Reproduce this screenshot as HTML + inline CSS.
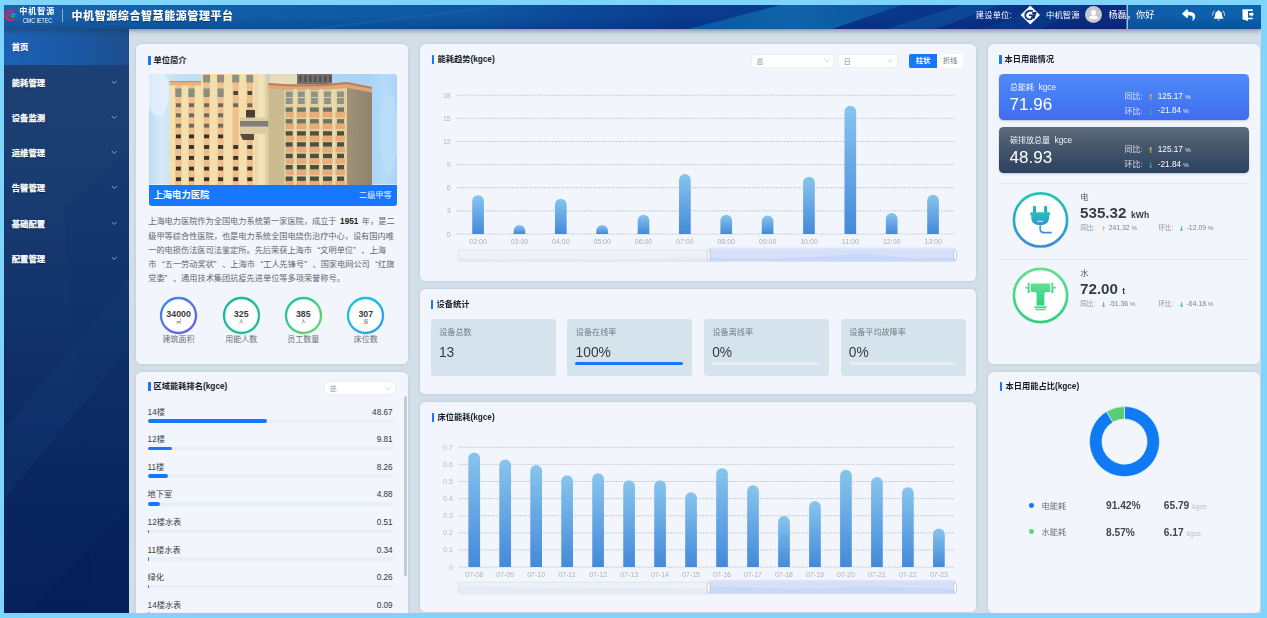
<!DOCTYPE html>
<html lang="zh-CN">
<head>
<meta charset="utf-8">
<title>中机智源综合智慧能源管理平台</title>
<style>
*{box-sizing:border-box;margin:0;padding:0}
html,body{width:1267px;height:618px;overflow:hidden;background:#7fd4fb;font-family:"Liberation Sans","Noto Sans CJK SC",sans-serif;}
#clip{position:absolute;left:4px;top:5px;width:1256.800px;height:607.800px;overflow:hidden;background:#d2dfe8}
#pg{position:absolute;left:-4px;top:-5px;width:1267px;height:618px}
b{font-weight:700}
.pl i{font-style:normal;display:inline-block;width:8.300px}
.pl i.o{text-align:right}
.pl i.c{text-align:left}
.pl b{margin:0 1.300px}
</style>
</head>
<body>
<div id="clip"><div id="pg">
<!-- main -->
<section>
<div style="position:absolute;left:129.3px;top:29px;width:1132px;height:584px;background:#d2dfe8;"></div>
<div style="position:absolute;left:136.3px;top:44px;width:272px;height:319.5px;background:#f2f6fc;border-radius:5.500px;box-shadow:0 0 3px rgba(120,140,165,.30);"></div>
<div style="position:absolute;left:136.3px;top:371.5px;width:272px;height:260px;background:#f2f6fc;border-radius:5.500px;box-shadow:0 0 3px rgba(120,140,165,.30);"></div>
<div style="position:absolute;left:420.3px;top:44px;width:555.8px;height:237.2px;background:#f2f6fc;border-radius:5.500px;box-shadow:0 0 3px rgba(120,140,165,.30);"></div>
<div style="position:absolute;left:420.3px;top:288.8px;width:555.8px;height:105.2px;background:#f2f6fc;border-radius:5.500px;box-shadow:0 0 3px rgba(120,140,165,.30);"></div>
<div style="position:absolute;left:420.3px;top:401.7px;width:555.8px;height:210px;background:#f2f6fc;border-radius:5.500px;box-shadow:0 0 3px rgba(120,140,165,.30);"></div>
<div style="position:absolute;left:988px;top:44px;width:271.7px;height:319.5px;background:#f2f6fc;border-radius:5.500px;box-shadow:0 0 3px rgba(120,140,165,.30);"></div>
<div style="position:absolute;left:988px;top:371.7px;width:271.7px;height:241px;background:#f2f6fc;border-radius:5.500px;box-shadow:0 0 3px rgba(120,140,165,.30);"></div>
</section>
<!-- sidebar -->
<section>
<div style="position:absolute;left:4px;top:29px;width:125.3px;height:584px;background:linear-gradient(180deg,#1e4174 0,#1b3f73 90px,#15376e 230px,#0c2963 400px,#06215c 584px);"></div>
<svg style="position:absolute;left:4px;top:29px" width="125.300" height="584" viewBox="0 0 125.300 584"><path d="M0 400 L125.300 250 L125.300 320 L0 470Z" fill="#1d4d86" opacity=".18"/><path d="M125.300 480 L20 584 L125.300 584Z" fill="#041a52" opacity=".35"/><path d="M60 180 L125.300 120 L125.300 584 L90 584Z" fill="#0a2a66" opacity=".12"/></svg>
<div style="position:absolute;left:4px;top:29px;width:125.3px;height:35.7px;background:linear-gradient(90deg,#1c63b5 0,#1b5cab 35%,#1b57a0 65%,#1d4d8c 100%);"></div>
<div style="position:absolute;left:11.8px;top:41.38px;height:12.45px;line-height:12.45px;font-size:8.3px;color:#fff;font-weight:700;white-space:nowrap;text-shadow:0 .5px 1px rgba(0,10,40,.6);-webkit-text-stroke:.25px #fff;">首页</div>
<div style="position:absolute;left:11.8px;top:76.62px;height:12.45px;line-height:12.45px;font-size:8.3px;color:#fff;font-weight:700;white-space:nowrap;text-shadow:0 .5px 1px rgba(0,10,40,.6);-webkit-text-stroke:.25px #fff;">能耗管理</div>
<svg style="position:absolute;left:110.500px;top:79.55px" width="6.500" height="4.640" viewBox="0 0 14 10"><path d="M2 2.500 L7 7.500 L12 2.500" fill="none" stroke="#8eafdb" stroke-width="2" stroke-linecap="round" stroke-linejoin="round"/></svg>
<div style="position:absolute;left:11.8px;top:111.88px;height:12.45px;line-height:12.45px;font-size:8.3px;color:#fff;font-weight:700;white-space:nowrap;text-shadow:0 .5px 1px rgba(0,10,40,.6);-webkit-text-stroke:.25px #fff;">设备监测</div>
<svg style="position:absolute;left:110.500px;top:114.80px" width="6.500" height="4.640" viewBox="0 0 14 10"><path d="M2 2.500 L7 7.500 L12 2.500" fill="none" stroke="#8eafdb" stroke-width="2" stroke-linecap="round" stroke-linejoin="round"/></svg>
<div style="position:absolute;left:11.8px;top:147.12px;height:12.45px;line-height:12.45px;font-size:8.3px;color:#fff;font-weight:700;white-space:nowrap;text-shadow:0 .5px 1px rgba(0,10,40,.6);-webkit-text-stroke:.25px #fff;">运维管理</div>
<svg style="position:absolute;left:110.500px;top:150.05px" width="6.500" height="4.640" viewBox="0 0 14 10"><path d="M2 2.500 L7 7.500 L12 2.500" fill="none" stroke="#8eafdb" stroke-width="2" stroke-linecap="round" stroke-linejoin="round"/></svg>
<div style="position:absolute;left:11.8px;top:182.38px;height:12.45px;line-height:12.45px;font-size:8.3px;color:#fff;font-weight:700;white-space:nowrap;text-shadow:0 .5px 1px rgba(0,10,40,.6);-webkit-text-stroke:.25px #fff;">告警管理</div>
<svg style="position:absolute;left:110.500px;top:185.30px" width="6.500" height="4.640" viewBox="0 0 14 10"><path d="M2 2.500 L7 7.500 L12 2.500" fill="none" stroke="#8eafdb" stroke-width="2" stroke-linecap="round" stroke-linejoin="round"/></svg>
<div style="position:absolute;left:11.8px;top:217.62px;height:12.45px;line-height:12.45px;font-size:8.3px;color:#fff;font-weight:700;white-space:nowrap;text-shadow:0 .5px 1px rgba(0,10,40,.6);-webkit-text-stroke:.25px #fff;">基础配置</div>
<svg style="position:absolute;left:110.500px;top:220.55px" width="6.500" height="4.640" viewBox="0 0 14 10"><path d="M2 2.500 L7 7.500 L12 2.500" fill="none" stroke="#8eafdb" stroke-width="2" stroke-linecap="round" stroke-linejoin="round"/></svg>
<div style="position:absolute;left:11.8px;top:252.88px;height:12.45px;line-height:12.45px;font-size:8.3px;color:#fff;font-weight:700;white-space:nowrap;text-shadow:0 .5px 1px rgba(0,10,40,.6);-webkit-text-stroke:.25px #fff;">配置管理</div>
<svg style="position:absolute;left:110.500px;top:255.80px" width="6.500" height="4.640" viewBox="0 0 14 10"><path d="M2 2.500 L7 7.500 L12 2.500" fill="none" stroke="#8eafdb" stroke-width="2" stroke-linecap="round" stroke-linejoin="round"/></svg>
</section>
<!-- card-intro -->
<section>
<div style="position:absolute;left:148.3px;top:55.8px;width:2.3px;height:9.2px;background:#1677ff;border-radius:.5px;"></div><div style="position:absolute;left:153.5px;top:55.01px;height:12.38px;line-height:12.38px;font-size:8.25px;color:#161c2b;font-weight:700;white-space:nowrap;">单位简介</div>
<svg style="position:absolute;left:148.5px;top:74px;border-radius:3px 3px 0 0;overflow:hidden" width="248.5" height="110.5" viewBox="0 0 248.5 110.5"><defs><linearGradient id="sky" x1="0" y1="0" x2="1" y2="0"><stop offset="0" stop-color="#b9dcf6"/><stop offset=".05" stop-color="#d6eaf8"/><stop offset=".12" stop-color="#c3e0f6"/><stop offset=".88" stop-color="#a6d4f6"/><stop offset=".95" stop-color="#b6dbf8"/><stop offset="1" stop-color="#a9d5f7"/></linearGradient><linearGradient id="cyl" x1="0" y1="0" x2="1" y2="0"><stop offset="0" stop-color="#e9d7a6"/><stop offset=".5" stop-color="#f3e8c4"/><stop offset="1" stop-color="#dcc894"/></linearGradient><linearGradient id="side" x1="0" y1="0" x2="1" y2="0"><stop offset="0" stop-color="#a09278"/><stop offset="1" stop-color="#8f836d"/></linearGradient></defs><filter id="bl" x="-5%" y="-5%" width="110%" height="110%"><feGaussianBlur stdDeviation=".32"/></filter><rect width="248.5" height="110.5" fill="url(#sky)"/><g filter="url(#bl)"><ellipse cx="9" cy="18" rx="11" ry="24" fill="#e6f2fa" opacity=".75"/><ellipse cx="240" cy="60" rx="9" ry="40" fill="#bfe0f9" opacity=".6"/><rect x="121" y="0" width="27" height="12" fill="#e9dcbc"/><rect x="148" y="0" width="35" height="10.5" fill="#74716d"/><rect x="150" y="1.5" width="2.6" height="6.5" fill="#55524f"/><rect x="155" y="1.5" width="2.6" height="6.5" fill="#55524f"/><rect x="160" y="1.5" width="2.6" height="6.5" fill="#55524f"/><rect x="165" y="1.5" width="2.6" height="6.5" fill="#55524f"/><rect x="170" y="1.5" width="2.6" height="6.5" fill="#55524f"/><rect x="175" y="1.5" width="2.6" height="6.5" fill="#55524f"/><rect x="180" y="1.5" width="2.6" height="6.5" fill="#55524f"/><rect x="20.7" y="7" width="32" height="104" fill="#f3e1ad"/><rect x="20.7" y="7" width="32" height="4.5" fill="#e9b27c"/><rect x="20.7" y="7" width="32" height="1" fill="#c98d5e"/><rect x="52" y="0" width="55" height="111" fill="#f2dfab"/><rect x="106" y="0" width="13.500" height="111" fill="url(#cyl)"/><rect x="26.3" y="12" width="6.200" height="99" fill="#f1bf8d"/><rect x="26.3" y="14.500" width="6.200" height="8.500" fill="#8a8d82"/><rect x="26.9" y="29.3" width="5" height="3.800" fill="#6a6a5e"/><rect x="26.9" y="39.4" width="5" height="3.800" fill="#6a6a5e"/><rect x="26.9" y="49.8" width="5" height="3.800" fill="#6a6a5e"/><rect x="26.9" y="60.5" width="5" height="3.800" fill="#35322d"/><rect x="26.9" y="71.1" width="5" height="3.800" fill="#35322d"/><rect x="26.9" y="82.0" width="5" height="3.800" fill="#35322d"/><rect x="26.9" y="92.7" width="5" height="3.800" fill="#35322d"/><rect x="26.9" y="103.3" width="5" height="3.800" fill="#35322d"/><rect x="39.4" y="12" width="6.200" height="99" fill="#f1bf8d"/><rect x="39.4" y="14.500" width="6.200" height="8.500" fill="#8a8d82"/><rect x="40.0" y="29.3" width="5" height="3.800" fill="#6a6a5e"/><rect x="40.0" y="39.4" width="5" height="3.800" fill="#6a6a5e"/><rect x="40.0" y="49.8" width="5" height="3.800" fill="#6a6a5e"/><rect x="40.0" y="60.5" width="5" height="3.800" fill="#35322d"/><rect x="40.0" y="71.1" width="5" height="3.800" fill="#35322d"/><rect x="40.0" y="82.0" width="5" height="3.800" fill="#35322d"/><rect x="40.0" y="92.7" width="5" height="3.800" fill="#35322d"/><rect x="40.0" y="103.3" width="5" height="3.800" fill="#35322d"/><rect x="54.5" y="0" width="6.200" height="111" fill="#f1bf8d"/><rect x="54.5" y="14.500" width="6.200" height="8.500" fill="#8a8d82"/><rect x="54.1" y="1" width="7" height="7.500" fill="#8f9186"/><rect x="55.1" y="29.3" width="5" height="3.800" fill="#6a6a5e"/><rect x="55.1" y="39.4" width="5" height="3.800" fill="#6a6a5e"/><rect x="55.1" y="49.8" width="5" height="3.800" fill="#6a6a5e"/><rect x="55.1" y="60.5" width="5" height="3.800" fill="#35322d"/><rect x="55.1" y="71.1" width="5" height="3.800" fill="#35322d"/><rect x="55.1" y="82.0" width="5" height="3.800" fill="#35322d"/><rect x="55.1" y="92.7" width="5" height="3.800" fill="#35322d"/><rect x="55.1" y="103.3" width="5" height="3.800" fill="#35322d"/><rect x="68.5" y="0" width="6.200" height="111" fill="#f1bf8d"/><rect x="68.5" y="14.500" width="6.200" height="8.500" fill="#8a8d82"/><rect x="68.1" y="1" width="7" height="7.500" fill="#8f9186"/><rect x="69.1" y="29.3" width="5" height="3.800" fill="#6a6a5e"/><rect x="69.1" y="39.4" width="5" height="3.800" fill="#6a6a5e"/><rect x="69.1" y="49.8" width="5" height="3.800" fill="#6a6a5e"/><rect x="69.1" y="60.5" width="5" height="3.800" fill="#35322d"/><rect x="69.1" y="71.1" width="5" height="3.800" fill="#35322d"/><rect x="69.1" y="82.0" width="5" height="3.800" fill="#35322d"/><rect x="69.1" y="92.7" width="5" height="3.800" fill="#35322d"/><rect x="69.1" y="103.3" width="5" height="3.800" fill="#35322d"/><rect x="83.6" y="0" width="6.200" height="111" fill="#f1bf8d"/><rect x="84.4" y="17" width="4.600" height="4" fill="#4a463e"/><rect x="83.2" y="1" width="7" height="7.500" fill="#8f9186"/><rect x="84.2" y="29.3" width="5" height="3.800" fill="#6a6a5e"/><rect x="84.2" y="71.1" width="5" height="3.800" fill="#35322d"/><rect x="84.2" y="82.0" width="5" height="3.800" fill="#35322d"/><rect x="84.2" y="92.7" width="5" height="3.800" fill="#35322d"/><rect x="84.2" y="103.3" width="5" height="3.800" fill="#35322d"/><rect x="97.7" y="0" width="6.200" height="111" fill="#f1bf8d"/><rect x="98.5" y="17" width="4.600" height="4" fill="#4a463e"/><rect x="97.3" y="1" width="7" height="7.500" fill="#8f9186"/><rect x="98.3" y="29.3" width="5" height="3.800" fill="#6a6a5e"/><rect x="98.3" y="71.1" width="5" height="3.800" fill="#35322d"/><rect x="98.3" y="82.0" width="5" height="3.800" fill="#35322d"/><rect x="98.3" y="92.7" width="5" height="3.800" fill="#35322d"/><rect x="98.3" y="103.3" width="5" height="3.800" fill="#35322d"/><rect x="91" y="43.500" width="28.500" height="16.500" fill="#dccb9e"/><rect x="91" y="47" width="28.500" height="5.500" fill="#7e8078"/><path d="M91 60 L105 60 L105 66 L94 66Z" fill="#5a4b3a"/><rect x="97" y="36" width="9" height="7.500" fill="#4a3f35"/><rect x="119.500" y="10" width="16" height="101" fill="#cdbb90"/><rect x="135.500" y="12" width="62.500" height="99" fill="#e3d0a1"/><rect x="198" y="14" width="25" height="97" fill="url(#side)"/><path d="M119.500 9 Q160 12.500 198 8 L223 13 L223 18.500 L198 14 Q160 18 119.500 15Z" fill="#dba77b"/><path d="M119.500 9 Q160 12.500 198 8 L223 13 L223 15 L198 10 Q160 14.500 119.500 11Z" fill="#bf7d56"/><rect x="137" y="37.9" width="59" height="5.600" fill="#e9ab77"/><rect x="137" y="49.6" width="59" height="5.600" fill="#e9ab77"/><rect x="137" y="61.7" width="59" height="5.600" fill="#e9ab77"/><rect x="137" y="72.7" width="59" height="5.600" fill="#e9ab77"/><rect x="137" y="84.2" width="59" height="5.600" fill="#e9ab77"/><rect x="137" y="95.5" width="59" height="5.600" fill="#e9ab77"/><rect x="137" y="107.0" width="59" height="5.600" fill="#e9ab77"/><rect x="136.8" y="17.500" width="6.800" height="12.500" fill="#8e9488"/><rect x="136.8" y="23" width="6.800" height="1" fill="#d9ceb0"/><rect x="136.7" y="33.4" width="7" height="4.400" fill="#6e7462"/><rect x="136.7" y="45.1" width="7" height="4.400" fill="#6e7462"/><rect x="136.7" y="57.2" width="7" height="4.400" fill="#4d5040"/><rect x="136.7" y="68.2" width="7" height="4.400" fill="#4d5040"/><rect x="136.7" y="79.7" width="7" height="4.400" fill="#4d5040"/><rect x="136.7" y="91.0" width="7" height="4.400" fill="#4d5040"/><rect x="136.7" y="102.5" width="7" height="4.400" fill="#4d5040"/><rect x="148.9" y="17.500" width="6.800" height="12.500" fill="#8e9488"/><rect x="148.9" y="23" width="6.800" height="1" fill="#d9ceb0"/><rect x="147.8" y="33.4" width="9" height="4.400" fill="#6e7462"/><rect x="147.8" y="45.1" width="9" height="4.400" fill="#6e7462"/><rect x="147.8" y="57.2" width="9" height="4.400" fill="#4d5040"/><rect x="147.8" y="68.2" width="9" height="4.400" fill="#4d5040"/><rect x="147.8" y="79.7" width="9" height="4.400" fill="#4d5040"/><rect x="147.8" y="91.0" width="9" height="4.400" fill="#4d5040"/><rect x="147.8" y="102.5" width="9" height="4.400" fill="#4d5040"/><rect x="162.0" y="17.500" width="6.800" height="12.500" fill="#8e9488"/><rect x="162.0" y="23" width="6.800" height="1" fill="#d9ceb0"/><rect x="160.9" y="33.4" width="9" height="4.400" fill="#6e7462"/><rect x="160.9" y="45.1" width="9" height="4.400" fill="#6e7462"/><rect x="160.9" y="57.2" width="9" height="4.400" fill="#4d5040"/><rect x="160.9" y="68.2" width="9" height="4.400" fill="#4d5040"/><rect x="160.9" y="79.7" width="9" height="4.400" fill="#4d5040"/><rect x="160.9" y="91.0" width="9" height="4.400" fill="#4d5040"/><rect x="160.9" y="102.5" width="9" height="4.400" fill="#4d5040"/><rect x="175.1" y="17.500" width="6.800" height="12.500" fill="#8e9488"/><rect x="175.1" y="23" width="6.800" height="1" fill="#d9ceb0"/><rect x="174.0" y="33.4" width="9" height="4.400" fill="#6e7462"/><rect x="174.0" y="45.1" width="9" height="4.400" fill="#6e7462"/><rect x="174.0" y="57.2" width="9" height="4.400" fill="#4d5040"/><rect x="174.0" y="68.2" width="9" height="4.400" fill="#4d5040"/><rect x="174.0" y="79.7" width="9" height="4.400" fill="#4d5040"/><rect x="174.0" y="91.0" width="9" height="4.400" fill="#4d5040"/><rect x="174.0" y="102.5" width="9" height="4.400" fill="#4d5040"/><rect x="188.1" y="17.500" width="6.800" height="12.500" fill="#8e9488"/><rect x="188.1" y="23" width="6.800" height="1" fill="#d9ceb0"/><rect x="188.0" y="33.4" width="7" height="4.400" fill="#6e7462"/><rect x="188.0" y="45.1" width="7" height="4.400" fill="#6e7462"/><rect x="188.0" y="57.2" width="7" height="4.400" fill="#4d5040"/><rect x="188.0" y="68.2" width="7" height="4.400" fill="#4d5040"/><rect x="188.0" y="79.7" width="7" height="4.400" fill="#4d5040"/><rect x="188.0" y="91.0" width="7" height="4.400" fill="#4d5040"/><rect x="188.0" y="102.5" width="7" height="4.400" fill="#4d5040"/><rect x="144.8" y="15" width="2.800" height="96" fill="#eadbaf"/><rect x="157.4" y="15" width="2.800" height="96" fill="#eadbaf"/><rect x="170.6" y="15" width="2.800" height="96" fill="#eadbaf"/><rect x="183.6" y="15" width="2.800" height="96" fill="#eadbaf"/><rect x="209.500" y="24" width="1.200" height="3" fill="#8d8470"/><rect x="209.500" y="35" width="1.200" height="3" fill="#8d8470"/><rect x="209.500" y="46" width="1.200" height="3" fill="#8d8470"/><rect x="209.500" y="57" width="1.200" height="3" fill="#8d8470"/><rect x="209.500" y="68" width="1.200" height="3" fill="#8d8470"/><rect x="209.500" y="79" width="1.200" height="3" fill="#8d8470"/><rect x="209.500" y="90" width="1.200" height="3" fill="#8d8470"/><rect x="209.500" y="101" width="1.200" height="3" fill="#8d8470"/></g></svg>
<div style="position:absolute;left:148.5px;top:184.5px;width:248.5px;height:21px;background:#1677ff;border-radius:0 0 3px 3px;"></div>
<div style="position:absolute;left:153.5px;top:189.33px;height:13.95px;line-height:13.95px;font-size:9.3px;color:#fff;font-weight:700;white-space:nowrap;">上海电力医院</div>
<div style="position:absolute;right:875.3px;top:190.05px;height:12.3px;line-height:12.3px;font-size:8.2px;color:rgba(255,255,255,.92);font-weight:400;white-space:nowrap;">二级甲等</div>
<div class="pl" style="position:absolute;left:148.2px;top:216.45px;height:12.3px;line-height:12.3px;font-size:8.2px;color:#62676e;font-weight:400;white-space:nowrap;">上海电力医院作为全国电力系统第一家医院，成立于 <b style="color:#222;font-weight:700">1951</b> 年，是二</div>
<div class="pl" style="position:absolute;left:148.2px;top:230.50px;height:12.3px;line-height:12.3px;font-size:8.2px;color:#62676e;font-weight:400;white-space:nowrap;">级甲等综合性医院，也是电力系统全国电烧伤治疗中心，设有国内唯</div>
<div class="pl" style="position:absolute;left:148.2px;top:244.55px;height:12.3px;line-height:12.3px;font-size:8.2px;color:#62676e;font-weight:400;white-space:nowrap;">一的电损伤法医司法鉴定所。先后荣获上海市<i class="o">“</i>文明单位<i class="c">”</i>、上海</div>
<div class="pl" style="position:absolute;left:148.2px;top:258.60px;height:12.3px;line-height:12.3px;font-size:8.2px;color:#62676e;font-weight:400;white-space:nowrap;">市<i class="o">“</i>五一劳动奖状<i class="c">”</i>、上海市<i class="o">“</i>工人先锋号<i class="c">”</i>、国家电网公司<i class="o">“</i>红旗</div>
<div class="pl" style="position:absolute;left:148.2px;top:272.65px;height:12.3px;line-height:12.3px;font-size:8.2px;color:#62676e;font-weight:400;white-space:nowrap;">党委<i class="c">”</i>、通用技术集团抗疫先进单位等多项荣誉称号。</div>
<svg style="position:absolute;left:159.1px;top:295.5px" width="39" height="39" viewBox="0 0 39 39"><defs><linearGradient id="cg0" x1="0" y1="0" x2="1" y2="1"><stop offset="0" stop-color="#3f8be6"/><stop offset="1" stop-color="#6a5ce6"/></linearGradient></defs><circle cx="19.500" cy="19.500" r="17.500" fill="#fff" stroke="url(#cg0)" stroke-width="2.300"/></svg>
<div style="position:absolute;left:153.6px;width:50px;top:309.4px;height:11px;line-height:11px;text-align:center;font-size:8.800px;font-weight:700;color:#3a3a3a;">34000</div>
<div style="position:absolute;left:153.6px;width:50px;top:318.1px;height:7px;line-height:7px;text-align:center;font-size:4.800px;color:#444;">㎡</div>
<div style="position:absolute;left:148.6px;width:60px;top:333.5px;height:12px;line-height:12px;text-align:center;font-size:8px;color:#6b7078;">建筑面积</div>
<svg style="position:absolute;left:221.7px;top:295.5px" width="39" height="39" viewBox="0 0 39 39"><defs><linearGradient id="cg1" x1="0" y1="0" x2="1" y2="1"><stop offset="0" stop-color="#17b5a8"/><stop offset="1" stop-color="#27c38b"/></linearGradient></defs><circle cx="19.500" cy="19.500" r="17.500" fill="#fff" stroke="url(#cg1)" stroke-width="2.300"/></svg>
<div style="position:absolute;left:216.2px;width:50px;top:309.4px;height:11px;line-height:11px;text-align:center;font-size:8.800px;font-weight:700;color:#3a3a3a;">325</div>
<div style="position:absolute;left:216.2px;width:50px;top:318.1px;height:7px;line-height:7px;text-align:center;font-size:4.800px;color:#444;">人</div>
<div style="position:absolute;left:211.2px;width:60px;top:333.5px;height:12px;line-height:12px;text-align:center;font-size:8px;color:#6b7078;">用能人数</div>
<svg style="position:absolute;left:283.8px;top:295.5px" width="39" height="39" viewBox="0 0 39 39"><defs><linearGradient id="cg2" x1="0" y1="0" x2="1" y2="1"><stop offset="0" stop-color="#18c49a"/><stop offset="1" stop-color="#74d46a"/></linearGradient></defs><circle cx="19.500" cy="19.500" r="17.500" fill="#fff" stroke="url(#cg2)" stroke-width="2.300"/></svg>
<div style="position:absolute;left:278.3px;width:50px;top:309.4px;height:11px;line-height:11px;text-align:center;font-size:8.800px;font-weight:700;color:#3a3a3a;">385</div>
<div style="position:absolute;left:278.3px;width:50px;top:318.1px;height:7px;line-height:7px;text-align:center;font-size:4.800px;color:#444;">人</div>
<div style="position:absolute;left:273.3px;width:60px;top:333.5px;height:12px;line-height:12px;text-align:center;font-size:8px;color:#6b7078;">员工数量</div>
<svg style="position:absolute;left:346.3px;top:295.5px" width="39" height="39" viewBox="0 0 39 39"><defs><linearGradient id="cg3" x1="0" y1="0" x2="1" y2="1"><stop offset="0" stop-color="#16cfd6"/><stop offset="1" stop-color="#2f97f3"/></linearGradient></defs><circle cx="19.500" cy="19.500" r="17.500" fill="#fff" stroke="url(#cg3)" stroke-width="2.300"/></svg>
<div style="position:absolute;left:340.8px;width:50px;top:309.4px;height:11px;line-height:11px;text-align:center;font-size:8.800px;font-weight:700;color:#3a3a3a;">307</div>
<div style="position:absolute;left:340.8px;width:50px;top:318.1px;height:7px;line-height:7px;text-align:center;font-size:4.800px;color:#444;">张</div>
<div style="position:absolute;left:335.8px;width:60px;top:333.5px;height:12px;line-height:12px;text-align:center;font-size:8px;color:#6b7078;">床位数</div>
</section>
<!-- card-rank -->
<section>
<div style="position:absolute;left:148.3px;top:382.0px;width:2.3px;height:9.2px;background:#1677ff;border-radius:.5px;"></div><div style="position:absolute;left:153.5px;top:381.21px;height:12.38px;line-height:12.38px;font-size:8.25px;color:#161c2b;font-weight:700;white-space:nowrap;">区域能耗排名(kgce)</div>
<div style="position:absolute;left:325.3px;top:382.3px;width:69.5px;height:12px;background:#fff;border-radius:2px;box-shadow:0 0 0 .5px #e3e8ef;"></div><div style="position:absolute;left:329.5px;top:383.93px;height:10.95px;line-height:10.95px;font-size:7.3px;color:#8a9099;font-weight:400;white-space:nowrap;">总</div><svg style="position:absolute;left:385.3px;top:386.5px" width="6" height="4" viewBox="0 0 12 8"><path d="M1.500 1.500 L6 6 L10.500 1.500" fill="none" stroke="#c3c8d0" stroke-width="1.500" stroke-linecap="round" stroke-linejoin="round"/></svg>
<div style="position:absolute;left:147.6px;top:406.75px;height:12.3px;line-height:12.3px;font-size:8.2px;color:#3a3f47;font-weight:400;white-space:nowrap;">14楼</div>
<div style="position:absolute;right:874.4px;top:406.75px;height:12.3px;line-height:12.3px;font-size:8.2px;color:#30353c;font-weight:400;white-space:nowrap;">48.67</div>
<div style="position:absolute;left:148px;top:419.35px;width:244.5px;height:3.5px;background:#e9eff5;border-radius:2px;"></div>
<div style="position:absolute;left:148px;top:419.35px;width:119.0px;height:3.5px;background:#1677ff;border-radius:2px;"></div>
<div style="position:absolute;left:147.6px;top:434.30px;height:12.3px;line-height:12.3px;font-size:8.2px;color:#3a3f47;font-weight:400;white-space:nowrap;">12楼</div>
<div style="position:absolute;right:874.4px;top:434.30px;height:12.3px;line-height:12.3px;font-size:8.2px;color:#30353c;font-weight:400;white-space:nowrap;">9.81</div>
<div style="position:absolute;left:148px;top:446.90000000000003px;width:244.5px;height:3.5px;background:#e9eff5;border-radius:2px;"></div>
<div style="position:absolute;left:148px;top:446.90000000000003px;width:23.99px;height:3.5px;background:#1677ff;border-radius:2px;"></div>
<div style="position:absolute;left:147.6px;top:461.85px;height:12.3px;line-height:12.3px;font-size:8.2px;color:#3a3f47;font-weight:400;white-space:nowrap;">11楼</div>
<div style="position:absolute;right:874.4px;top:461.85px;height:12.3px;line-height:12.3px;font-size:8.2px;color:#30353c;font-weight:400;white-space:nowrap;">8.26</div>
<div style="position:absolute;left:148px;top:474.45000000000005px;width:244.5px;height:3.5px;background:#e9eff5;border-radius:2px;"></div>
<div style="position:absolute;left:148px;top:474.45000000000005px;width:20.2px;height:3.5px;background:#1677ff;border-radius:2px;"></div>
<div style="position:absolute;left:147.6px;top:489.40px;height:12.3px;line-height:12.3px;font-size:8.2px;color:#3a3f47;font-weight:400;white-space:nowrap;">地下室</div>
<div style="position:absolute;right:874.4px;top:489.40px;height:12.3px;line-height:12.3px;font-size:8.2px;color:#30353c;font-weight:400;white-space:nowrap;">4.88</div>
<div style="position:absolute;left:148px;top:502.00000000000006px;width:244.5px;height:3.5px;background:#e9eff5;border-radius:2px;"></div>
<div style="position:absolute;left:148px;top:502.00000000000006px;width:11.93px;height:3.5px;background:#1677ff;border-radius:2px;"></div>
<div style="position:absolute;left:147.6px;top:516.95px;height:12.3px;line-height:12.3px;font-size:8.2px;color:#3a3f47;font-weight:400;white-space:nowrap;">12楼水表</div>
<div style="position:absolute;right:874.4px;top:516.95px;height:12.3px;line-height:12.3px;font-size:8.2px;color:#30353c;font-weight:400;white-space:nowrap;">0.51</div>
<div style="position:absolute;left:148px;top:529.55px;width:244.5px;height:3.5px;background:#e9eff5;border-radius:2px;"></div>
<div style="position:absolute;left:148px;top:529.55px;width:1.25px;height:3.5px;background:#1677ff;border-radius:2px;"></div>
<div style="position:absolute;left:147.6px;top:544.50px;height:12.3px;line-height:12.3px;font-size:8.2px;color:#3a3f47;font-weight:400;white-space:nowrap;">11楼水表</div>
<div style="position:absolute;right:874.4px;top:544.50px;height:12.3px;line-height:12.3px;font-size:8.2px;color:#30353c;font-weight:400;white-space:nowrap;">0.34</div>
<div style="position:absolute;left:148px;top:557.0999999999999px;width:244.5px;height:3.5px;background:#e9eff5;border-radius:2px;"></div>
<div style="position:absolute;left:148px;top:557.0999999999999px;width:1.2px;height:3.5px;background:#1677ff;border-radius:2px;"></div>
<div style="position:absolute;left:147.6px;top:572.05px;height:12.3px;line-height:12.3px;font-size:8.2px;color:#3a3f47;font-weight:400;white-space:nowrap;">绿化</div>
<div style="position:absolute;right:874.4px;top:572.05px;height:12.3px;line-height:12.3px;font-size:8.2px;color:#30353c;font-weight:400;white-space:nowrap;">0.26</div>
<div style="position:absolute;left:148px;top:584.65px;width:244.5px;height:3.5px;background:#e9eff5;border-radius:2px;"></div>
<div style="position:absolute;left:148px;top:584.65px;width:1.2px;height:3.5px;background:#1677ff;border-radius:2px;"></div>
<div style="position:absolute;left:147.6px;top:599.60px;height:12.3px;line-height:12.3px;font-size:8.2px;color:#3a3f47;font-weight:400;white-space:nowrap;">14楼水表</div>
<div style="position:absolute;right:874.4px;top:599.60px;height:12.3px;line-height:12.3px;font-size:8.2px;color:#30353c;font-weight:400;white-space:nowrap;">0.09</div>
<div style="position:absolute;left:148px;top:612.1999999999999px;width:244.5px;height:3.5px;background:#e9eff5;border-radius:2px;"></div>
<div style="position:absolute;left:148px;top:612.1999999999999px;width:1.2px;height:3.5px;background:#1677ff;border-radius:2px;"></div>
<div style="position:absolute;left:403.6px;top:395.5px;width:3.2px;height:180px;background:#c3cbd4;border-radius:2px;"></div>
</section>
<!-- card-trend -->
<section>
<div style="position:absolute;left:432.2px;top:54.7px;width:2.3px;height:9.2px;background:#1677ff;border-radius:.5px;"></div><div style="position:absolute;left:437.4px;top:53.91px;height:12.38px;line-height:12.38px;font-size:8.25px;color:#161c2b;font-weight:700;white-space:nowrap;">能耗趋势(kgce)</div>
<div style="position:absolute;left:752px;top:54.8px;width:81px;height:12.2px;background:#fff;border-radius:2px;box-shadow:0 0 0 .5px #e3e8ef;"></div><div style="position:absolute;left:756.2px;top:56.52px;height:10.95px;line-height:10.95px;font-size:7.3px;color:#8a9099;font-weight:400;white-space:nowrap;">总</div><svg style="position:absolute;left:823.5px;top:59.1px" width="6" height="4" viewBox="0 0 12 8"><path d="M1.500 1.500 L6 6 L10.500 1.500" fill="none" stroke="#c3c8d0" stroke-width="1.500" stroke-linecap="round" stroke-linejoin="round"/></svg>
<div style="position:absolute;left:839.3px;top:54.8px;width:57.5px;height:12.2px;background:#fff;border-radius:2px;box-shadow:0 0 0 .5px #e3e8ef;"></div><div style="position:absolute;left:843.5px;top:56.52px;height:10.95px;line-height:10.95px;font-size:7.3px;color:#8a9099;font-weight:400;white-space:nowrap;">日</div><svg style="position:absolute;left:887.3px;top:59.1px" width="6" height="4" viewBox="0 0 12 8"><path d="M1.500 1.500 L6 6 L10.500 1.500" fill="none" stroke="#c3c8d0" stroke-width="1.500" stroke-linecap="round" stroke-linejoin="round"/></svg>
<div style="position:absolute;left:909px;top:54.2px;width:28px;height:13.4px;background:#1677ff;border-radius:2px 0 0 2px;"></div>
<div style="position:absolute;left:937px;top:54.2px;width:26px;height:13.4px;background:#fff;border-radius:0 2px 2px 0;"></div>
<div style="position:absolute;left:909px;top:54.200px;width:28px;height:13.400px;line-height:13.400px;text-align:center;font-size:7.300px;font-weight:700;color:#fff;">柱状</div>
<div style="position:absolute;left:937px;top:54.200px;width:26px;height:13.400px;line-height:13.400px;text-align:center;font-size:7.300px;color:#6d737b;">折线</div>
<svg style="position:absolute;left:0;top:0" width="1267" height="618" viewBox="0 0 1267 618" font-family='"Liberation Sans","Noto Sans CJK SC",sans-serif'><defs><linearGradient id="bg1" x1="0" y1="0" x2="0" y2="1"><stop offset="0" stop-color="#87c5ed"/><stop offset="1" stop-color="#4489da"/></linearGradient></defs><line x1="456.6" x2="954.7" y1="234.00" y2="234.00" stroke="#b3bac5" stroke-width=".75" stroke-dasharray="1.800 1.100"/><text x="450.70000000000005" y="236.50" font-size="7" fill="#b0b7c1" text-anchor="end">0</text><line x1="456.6" x2="954.7" y1="210.87" y2="210.87" stroke="#b3bac5" stroke-width=".75" stroke-dasharray="1.800 1.100"/><text x="450.70000000000005" y="213.37" font-size="7" fill="#b0b7c1" text-anchor="end">3</text><line x1="456.6" x2="954.7" y1="187.74" y2="187.74" stroke="#b3bac5" stroke-width=".75" stroke-dasharray="1.800 1.100"/><text x="450.70000000000005" y="190.24" font-size="7" fill="#b0b7c1" text-anchor="end">6</text><line x1="456.6" x2="954.7" y1="164.61" y2="164.61" stroke="#b3bac5" stroke-width=".75" stroke-dasharray="1.800 1.100"/><text x="450.70000000000005" y="167.11" font-size="7" fill="#b0b7c1" text-anchor="end">9</text><line x1="456.6" x2="954.7" y1="141.48" y2="141.48" stroke="#b3bac5" stroke-width=".75" stroke-dasharray="1.800 1.100"/><text x="450.70000000000005" y="143.98" font-size="7" fill="#b0b7c1" text-anchor="end">12</text><line x1="456.6" x2="954.7" y1="118.35" y2="118.35" stroke="#b3bac5" stroke-width=".75" stroke-dasharray="1.800 1.100"/><text x="450.70000000000005" y="120.85" font-size="7" fill="#b0b7c1" text-anchor="end">15</text><line x1="456.6" x2="954.7" y1="95.22" y2="95.22" stroke="#b3bac5" stroke-width=".75" stroke-dasharray="1.800 1.100"/><text x="450.70000000000005" y="97.72" font-size="7" fill="#b0b7c1" text-anchor="end">18</text><path d="M472.23 234.00 V200.99 A5.85 5.85 0 0 1 483.93 200.99 V234.00Z" fill="url(#bg1)"/><text x="478.08" y="244.20" font-size="7" fill="#aab1bc" text-anchor="middle">02:00</text><path d="M513.59 234.00 V230.91 A5.85 5.85 0 0 1 525.29 230.91 V234.00Z" fill="url(#bg1)"/><text x="519.44" y="244.20" font-size="7" fill="#aab1bc" text-anchor="middle">03:00</text><path d="M554.95 234.00 V204.62 A5.85 5.85 0 0 1 566.65 204.62 V234.00Z" fill="url(#bg1)"/><text x="560.80" y="244.20" font-size="7" fill="#aab1bc" text-anchor="middle">04:00</text><path d="M596.31 234.00 V230.91 A5.85 5.85 0 0 1 608.01 230.91 V234.00Z" fill="url(#bg1)"/><text x="602.16" y="244.20" font-size="7" fill="#aab1bc" text-anchor="middle">05:00</text><path d="M637.67 234.00 V220.65 A5.85 5.85 0 0 1 649.37 220.65 V234.00Z" fill="url(#bg1)"/><text x="643.52" y="244.20" font-size="7" fill="#aab1bc" text-anchor="middle">06:00</text><path d="M679.03 234.00 V179.79 A5.85 5.85 0 0 1 690.73 179.79 V234.00Z" fill="url(#bg1)"/><text x="684.88" y="244.20" font-size="7" fill="#aab1bc" text-anchor="middle">07:00</text><path d="M720.39 234.00 V220.65 A5.85 5.85 0 0 1 732.09 220.65 V234.00Z" fill="url(#bg1)"/><text x="726.24" y="244.20" font-size="7" fill="#aab1bc" text-anchor="middle">08:00</text><path d="M761.75 234.00 V221.27 A5.85 5.85 0 0 1 773.45 221.27 V234.00Z" fill="url(#bg1)"/><text x="767.60" y="244.20" font-size="7" fill="#aab1bc" text-anchor="middle">09:00</text><path d="M803.11 234.00 V182.49 A5.85 5.85 0 0 1 814.81 182.49 V234.00Z" fill="url(#bg1)"/><text x="808.96" y="244.20" font-size="7" fill="#aab1bc" text-anchor="middle">10:00</text><path d="M844.47 234.00 V111.71 A5.85 5.85 0 0 1 856.17 111.71 V234.00Z" fill="url(#bg1)"/><text x="850.32" y="244.20" font-size="7" fill="#aab1bc" text-anchor="middle">11:00</text><path d="M885.83 234.00 V218.96 A5.85 5.85 0 0 1 897.53 218.96 V234.00Z" fill="url(#bg1)"/><text x="891.68" y="244.20" font-size="7" fill="#aab1bc" text-anchor="middle">12:00</text><path d="M927.19 234.00 V200.61 A5.85 5.85 0 0 1 938.89 200.61 V234.00Z" fill="url(#bg1)"/><text x="933.04" y="244.20" font-size="7" fill="#aab1bc" text-anchor="middle">13:00</text><rect x="458" y="249.8" width="497.70000000000005" height="11.5" rx="1.500" fill="#eef2f7" stroke="#d9dfe8" stroke-width=".7"/><rect x="708.6" y="249.8" width="247.10000000000002" height="11.5" fill="#d3defb" opacity=".95"/><rect x="708.6" y="247.60000000000002" width="247.10000000000002" height="2.200" fill="#d7e0f6" opacity=".8"/><clipPath id="bg1c"><rect x="708.6" y="249.8" width="247.10000000000002" height="11.5"/></clipPath><polygon points="458.0,261.3 458.0,258.0 503.2,259.4 548.5,258.2 593.7,259.4 639.0,258.9 684.2,257.0 729.5,258.9 774.7,258.9 820.0,257.1 865.2,253.8 910.5,258.8 955.7,258.0 955.7,261.3" fill="#d5dff5" opacity=".35"/><polygon points="458.0,261.3 458.0,258.0 503.2,259.4 548.5,258.2 593.7,259.4 639.0,258.9 684.2,257.0 729.5,258.9 774.7,258.9 820.0,257.1 865.2,253.8 910.5,258.8 955.7,258.0 955.7,261.3" fill="#c3d3f7" stroke="#b9cdf6" stroke-width=".5" opacity=".6" clip-path="url(#bg1c)"/><rect x="707.2" y="251.10000000000002" width="2.800" height="8.9" rx="1.300" fill="#fff" stroke="#a9b4c6" stroke-width=".6"/><rect x="953.8000000000001" y="251.10000000000002" width="2.800" height="8.9" rx="1.300" fill="#fff" stroke="#a9b4c6" stroke-width=".6"/></svg>
</section>
<!-- card-device -->
<section>
<div style="position:absolute;left:431.2px;top:300.0px;width:2.3px;height:9.2px;background:#1677ff;border-radius:.5px;"></div><div style="position:absolute;left:436.4px;top:299.21px;height:12.38px;line-height:12.38px;font-size:8.25px;color:#161c2b;font-weight:700;white-space:nowrap;">设备统计</div>
<div style="position:absolute;left:430.6px;top:318.8px;width:125px;height:57.5px;background:#d5e3ec;border-radius:3.500px;"></div>
<div style="position:absolute;left:439.20000000000005px;top:326.53px;height:12.15px;line-height:12.15px;font-size:8.1px;color:#727a84;font-weight:400;white-space:nowrap;">设备总数</div>
<div style="position:absolute;left:438.90000000000003px;top:343.35px;height:20.7px;line-height:20.7px;font-size:13.8px;color:#353b42;font-weight:400;white-space:nowrap;">13</div>
<div style="position:absolute;left:567.25px;top:318.8px;width:125px;height:57.5px;background:#d5e3ec;border-radius:3.500px;"></div>
<div style="position:absolute;left:575.85px;top:326.53px;height:12.15px;line-height:12.15px;font-size:8.1px;color:#727a84;font-weight:400;white-space:nowrap;">设备在线率</div>
<div style="position:absolute;left:575.55px;top:343.35px;height:20.7px;line-height:20.7px;font-size:13.8px;color:#353b42;font-weight:400;white-space:nowrap;">100%</div>
<div style="position:absolute;left:575.45px;top:361.9px;width:107.5px;height:3.2px;background:#e6eef4;border-radius:2px;"></div>
<div style="position:absolute;left:575.45px;top:361.9px;width:107.5px;height:3.2px;background:#1677ff;border-radius:2px;"></div>
<div style="position:absolute;left:703.9000000000001px;top:318.8px;width:125px;height:57.5px;background:#d5e3ec;border-radius:3.500px;"></div>
<div style="position:absolute;left:712.5000000000001px;top:326.53px;height:12.15px;line-height:12.15px;font-size:8.1px;color:#727a84;font-weight:400;white-space:nowrap;">设备离线率</div>
<div style="position:absolute;left:712.2px;top:343.35px;height:20.7px;line-height:20.7px;font-size:13.8px;color:#353b42;font-weight:400;white-space:nowrap;">0%</div>
<div style="position:absolute;left:712.1000000000001px;top:361.9px;width:107.5px;height:3.2px;background:#e6eef4;border-radius:2px;"></div>
<div style="position:absolute;left:840.5500000000001px;top:318.8px;width:125px;height:57.5px;background:#d5e3ec;border-radius:3.500px;"></div>
<div style="position:absolute;left:849.1500000000001px;top:326.53px;height:12.15px;line-height:12.15px;font-size:8.1px;color:#727a84;font-weight:400;white-space:nowrap;">设备平均故障率</div>
<div style="position:absolute;left:848.85px;top:343.35px;height:20.7px;line-height:20.7px;font-size:13.8px;color:#353b42;font-weight:400;white-space:nowrap;">0%</div>
<div style="position:absolute;left:848.7500000000001px;top:361.9px;width:107.5px;height:3.2px;background:#e6eef4;border-radius:2px;"></div>
</section>
<!-- card-bed -->
<section>
<div style="position:absolute;left:432.2px;top:412.7px;width:2.3px;height:9.2px;background:#1677ff;border-radius:.5px;"></div><div style="position:absolute;left:437.4px;top:411.91px;height:12.38px;line-height:12.38px;font-size:8.25px;color:#161c2b;font-weight:700;white-space:nowrap;">床位能耗(kgce)</div>
<svg style="position:absolute;left:0;top:0" width="1267" height="618" viewBox="0 0 1267 618" font-family='"Liberation Sans","Noto Sans CJK SC",sans-serif'><defs><linearGradient id="bg2" x1="0" y1="0" x2="0" y2="1"><stop offset="0" stop-color="#87c5ed"/><stop offset="1" stop-color="#4489da"/></linearGradient></defs><line x1="458.7" x2="954.7" y1="567.10" y2="567.10" stroke="#b3bac5" stroke-width=".75" stroke-dasharray="1.800 1.100"/><text x="452.8" y="569.60" font-size="7" fill="#b0b7c1" text-anchor="end">0</text><line x1="458.7" x2="954.7" y1="549.98" y2="549.98" stroke="#b3bac5" stroke-width=".75" stroke-dasharray="1.800 1.100"/><text x="452.8" y="552.48" font-size="7" fill="#b0b7c1" text-anchor="end">0.1</text><line x1="458.7" x2="954.7" y1="532.86" y2="532.86" stroke="#b3bac5" stroke-width=".75" stroke-dasharray="1.800 1.100"/><text x="452.8" y="535.36" font-size="7" fill="#b0b7c1" text-anchor="end">0.2</text><line x1="458.7" x2="954.7" y1="515.74" y2="515.74" stroke="#b3bac5" stroke-width=".75" stroke-dasharray="1.800 1.100"/><text x="452.8" y="518.24" font-size="7" fill="#b0b7c1" text-anchor="end">0.3</text><line x1="458.7" x2="954.7" y1="498.62" y2="498.62" stroke="#b3bac5" stroke-width=".75" stroke-dasharray="1.800 1.100"/><text x="452.8" y="501.12" font-size="7" fill="#b0b7c1" text-anchor="end">0.4</text><line x1="458.7" x2="954.7" y1="481.50" y2="481.50" stroke="#b3bac5" stroke-width=".75" stroke-dasharray="1.800 1.100"/><text x="452.8" y="484.00" font-size="7" fill="#b0b7c1" text-anchor="end">0.5</text><line x1="458.7" x2="954.7" y1="464.38" y2="464.38" stroke="#b3bac5" stroke-width=".75" stroke-dasharray="1.800 1.100"/><text x="452.8" y="466.88" font-size="7" fill="#b0b7c1" text-anchor="end">0.6</text><line x1="458.7" x2="954.7" y1="447.26" y2="447.26" stroke="#b3bac5" stroke-width=".75" stroke-dasharray="1.800 1.100"/><text x="452.8" y="449.76" font-size="7" fill="#b0b7c1" text-anchor="end">0.7</text><path d="M468.34 567.10 V458.42 A5.85 5.85 0 0 1 480.04 458.42 V567.10Z" fill="url(#bg2)"/><text x="474.19" y="577.00" font-size="7" fill="#aab1bc" text-anchor="middle">07-08</text><path d="M499.32 567.10 V465.44 A5.85 5.85 0 0 1 511.02 465.44 V567.10Z" fill="url(#bg2)"/><text x="505.17" y="577.00" font-size="7" fill="#aab1bc" text-anchor="middle">07-09</text><path d="M530.30 567.10 V470.91 A5.85 5.85 0 0 1 542.00 470.91 V567.10Z" fill="url(#bg2)"/><text x="536.15" y="577.00" font-size="7" fill="#aab1bc" text-anchor="middle">07-10</text><path d="M561.28 567.10 V481.02 A5.85 5.85 0 0 1 572.98 481.02 V567.10Z" fill="url(#bg2)"/><text x="567.13" y="577.00" font-size="7" fill="#aab1bc" text-anchor="middle">07-11</text><path d="M592.26 567.10 V479.13 A5.85 5.85 0 0 1 603.96 479.13 V567.10Z" fill="url(#bg2)"/><text x="598.11" y="577.00" font-size="7" fill="#aab1bc" text-anchor="middle">07-12</text><path d="M623.24 567.10 V486.15 A5.85 5.85 0 0 1 634.94 486.15 V567.10Z" fill="url(#bg2)"/><text x="629.09" y="577.00" font-size="7" fill="#aab1bc" text-anchor="middle">07-13</text><path d="M654.22 567.10 V486.15 A5.85 5.85 0 0 1 665.92 486.15 V567.10Z" fill="url(#bg2)"/><text x="660.07" y="577.00" font-size="7" fill="#aab1bc" text-anchor="middle">07-14</text><path d="M685.20 567.10 V498.14 A5.85 5.85 0 0 1 696.90 498.14 V567.10Z" fill="url(#bg2)"/><text x="691.05" y="577.00" font-size="7" fill="#aab1bc" text-anchor="middle">07-15</text><path d="M716.18 567.10 V474.00 A5.85 5.85 0 0 1 727.88 474.00 V567.10Z" fill="url(#bg2)"/><text x="722.03" y="577.00" font-size="7" fill="#aab1bc" text-anchor="middle">07-16</text><path d="M747.16 567.10 V491.12 A5.85 5.85 0 0 1 758.86 491.12 V567.10Z" fill="url(#bg2)"/><text x="753.01" y="577.00" font-size="7" fill="#aab1bc" text-anchor="middle">07-17</text><path d="M778.14 567.10 V521.93 A5.85 5.85 0 0 1 789.84 521.93 V567.10Z" fill="url(#bg2)"/><text x="783.99" y="577.00" font-size="7" fill="#aab1bc" text-anchor="middle">07-18</text><path d="M809.12 567.10 V506.87 A5.85 5.85 0 0 1 820.82 506.87 V567.10Z" fill="url(#bg2)"/><text x="814.97" y="577.00" font-size="7" fill="#aab1bc" text-anchor="middle">07-19</text><path d="M840.10 567.10 V475.54 A5.85 5.85 0 0 1 851.80 475.54 V567.10Z" fill="url(#bg2)"/><text x="845.95" y="577.00" font-size="7" fill="#aab1bc" text-anchor="middle">07-20</text><path d="M871.08 567.10 V482.90 A5.85 5.85 0 0 1 882.78 482.90 V567.10Z" fill="url(#bg2)"/><text x="876.93" y="577.00" font-size="7" fill="#aab1bc" text-anchor="middle">07-21</text><path d="M902.06 567.10 V493.00 A5.85 5.85 0 0 1 913.76 493.00 V567.10Z" fill="url(#bg2)"/><text x="907.91" y="577.00" font-size="7" fill="#aab1bc" text-anchor="middle">07-22</text><path d="M933.04 567.10 V534.43 A5.85 5.85 0 0 1 944.74 534.43 V567.10Z" fill="url(#bg2)"/><text x="938.89" y="577.00" font-size="7" fill="#aab1bc" text-anchor="middle">07-23</text><rect x="458" y="582.2" width="497.70000000000005" height="11.399999999999977" rx="1.500" fill="#eef2f7" stroke="#d9dfe8" stroke-width=".7"/><rect x="708.6" y="582.2" width="247.10000000000002" height="11.399999999999977" fill="#d3defb" opacity=".95"/><rect x="708.6" y="580.0" width="247.10000000000002" height="2.200" fill="#d7e0f6" opacity=".8"/><clipPath id="bg2c"><rect x="708.6" y="582.2" width="247.10000000000002" height="11.399999999999977"/></clipPath><polygon points="458.0,593.6 458.0,586.2 491.2,586.5 524.4,586.8 557.5,587.3 590.7,587.3 623.9,587.6 657.1,587.6 690.3,588.2 723.4,587.0 756.6,587.9 789.8,589.5 823.0,588.7 856.2,587.1 889.3,587.4 922.5,588.0 955.7,590.1 955.7,593.6" fill="#d5dff5" opacity=".35"/><polygon points="458.0,593.6 458.0,586.2 491.2,586.5 524.4,586.8 557.5,587.3 590.7,587.3 623.9,587.6 657.1,587.6 690.3,588.2 723.4,587.0 756.6,587.9 789.8,589.5 823.0,588.7 856.2,587.1 889.3,587.4 922.5,588.0 955.7,590.1 955.7,593.6" fill="#c3d3f7" stroke="#b9cdf6" stroke-width=".5" opacity=".6" clip-path="url(#bg2c)"/><rect x="707.2" y="583.5" width="2.800" height="8.799999999999978" rx="1.300" fill="#fff" stroke="#a9b4c6" stroke-width=".6"/><rect x="953.8000000000001" y="583.5" width="2.800" height="8.799999999999978" rx="1.300" fill="#fff" stroke="#a9b4c6" stroke-width=".6"/></svg>
</section>
<!-- card-today -->
<section>
<div style="position:absolute;left:999.3px;top:54.7px;width:2.3px;height:9.2px;background:#1677ff;border-radius:.5px;"></div><div style="position:absolute;left:1004.5px;top:53.91px;height:12.38px;line-height:12.38px;font-size:8.25px;color:#161c2b;font-weight:700;white-space:nowrap;">本日用能情况</div>
<div style="position:absolute;left:999.3px;top:74.1px;width:249.7px;height:46.3px;background:linear-gradient(180deg,#4d8cf8 0,#4679f3 60%,#416cee 100%);border-radius:4.500px;box-shadow:0 1px 2px rgba(40,60,120,.25);"></div><div style="position:absolute;left:1010px;top:80.90px;height:12.0px;line-height:12.0px;font-size:8px;color:rgba(255,255,255,.93);font-weight:400;white-space:nowrap;">总能耗&nbsp; <span style="font-size:8.400px">kgce</span></div><div style="position:absolute;left:1009.6px;top:92.15px;height:25.5px;line-height:25.5px;font-size:17px;color:#fff;font-weight:400;white-space:nowrap;">71.96</div><div style="position:absolute;left:1124.5px;top:91.20px;height:12.0px;line-height:12.0px;font-size:8px;color:rgba(255,255,255,.8);font-weight:400;white-space:nowrap;">同比:</div><svg style="position:absolute;left:1148.60px;top:94.10px" width="3.6" height="6.2" viewBox="0 0 3.6 6.2"><path d="M1.8 6.2 V.8 M.5 2.1 L1.8 .6 L3.1 2.1" fill="none" stroke="#f5b73b" stroke-width=".9" stroke-linecap="round" stroke-linejoin="round"/></svg><div style="position:absolute;left:1157.8px;top:91.05px;height:12.3px;line-height:12.3px;font-size:8.2px;color:#fff;font-weight:400;white-space:nowrap;">125.17 <span style="font-size:6.200px;opacity:.85">%</span></div><div style="position:absolute;left:1124.5px;top:105.60px;height:12.0px;line-height:12.0px;font-size:8px;color:rgba(255,255,255,.8);font-weight:400;white-space:nowrap;">环比:</div><svg style="position:absolute;left:1148.60px;top:108.50px" width="3.6" height="6.2" viewBox="0 0 3.6 6.2"><path d="M1.8 0 V5.4 M.5 4.1000000000000005 L1.8 5.6000000000000005 L3.1 4.1000000000000005" fill="none" stroke="#2fbf71" stroke-width=".9" stroke-linecap="round" stroke-linejoin="round"/></svg><div style="position:absolute;left:1157.8px;top:105.45px;height:12.3px;line-height:12.3px;font-size:8.2px;color:#fff;font-weight:400;white-space:nowrap;">-21.84 <span style="font-size:6.200px;opacity:.85">%</span></div>
<div style="position:absolute;left:999.3px;top:127px;width:249.7px;height:46.3px;background:linear-gradient(180deg,#5d6a7a 0,#45566c 45%,#2b4161 100%);border-radius:4.500px;box-shadow:0 1px 2px rgba(40,60,120,.25);"></div><div style="position:absolute;left:1010px;top:134.30px;height:12.0px;line-height:12.0px;font-size:8px;color:rgba(255,255,255,.93);font-weight:400;white-space:nowrap;">碳排放总量&nbsp; <span style="font-size:8.400px">kgce</span></div><div style="position:absolute;left:1009.6px;top:144.75px;height:25.5px;line-height:25.5px;font-size:17px;color:#fff;font-weight:400;white-space:nowrap;">48.93</div><div style="position:absolute;left:1124.5px;top:144.00px;height:12.0px;line-height:12.0px;font-size:8px;color:rgba(255,255,255,.8);font-weight:400;white-space:nowrap;">同比:</div><svg style="position:absolute;left:1148.60px;top:146.90px" width="3.6" height="6.2" viewBox="0 0 3.6 6.2"><path d="M1.8 6.2 V.8 M.5 2.1 L1.8 .6 L3.1 2.1" fill="none" stroke="#f5b73b" stroke-width=".9" stroke-linecap="round" stroke-linejoin="round"/></svg><div style="position:absolute;left:1157.8px;top:143.85px;height:12.3px;line-height:12.3px;font-size:8.2px;color:#fff;font-weight:400;white-space:nowrap;">125.17 <span style="font-size:6.200px;opacity:.85">%</span></div><div style="position:absolute;left:1124.5px;top:158.70px;height:12.0px;line-height:12.0px;font-size:8px;color:rgba(255,255,255,.8);font-weight:400;white-space:nowrap;">环比:</div><svg style="position:absolute;left:1148.60px;top:161.60px" width="3.6" height="6.2" viewBox="0 0 3.6 6.2"><path d="M1.8 0 V5.4 M.5 4.1000000000000005 L1.8 5.6000000000000005 L3.1 4.1000000000000005" fill="none" stroke="#2fbf71" stroke-width=".9" stroke-linecap="round" stroke-linejoin="round"/></svg><div style="position:absolute;left:1157.8px;top:158.55px;height:12.3px;line-height:12.3px;font-size:8.2px;color:#fff;font-weight:400;white-space:nowrap;">-21.84 <span style="font-size:6.200px;opacity:.85">%</span></div>
<div style="position:absolute;left:1000px;top:182.8px;width:248.5px;height:0.8px;background:#e4e9ef;"></div>
<div style="position:absolute;left:1000px;top:258.7px;width:248.5px;height:0.8px;background:#e4e9ef;"></div>
<svg style="position:absolute;left:0;top:0" width="1267" height="618" viewBox="0 0 1267 618"><defs><linearGradient id="e1" x1="0" y1="0" x2="0" y2="1"><stop offset="0" stop-color="#1fc7b2"/><stop offset="1" stop-color="#3a8bdc"/></linearGradient><linearGradient id="w1" x1="0" y1="0" x2="0" y2="1"><stop offset="0" stop-color="#62df92"/><stop offset="1" stop-color="#2fd07f"/></linearGradient></defs><circle cx="1040.500" cy="219.900" r="26.600" fill="#fff" stroke="url(#e1)" stroke-width="2.700"/><circle cx="1040.500" cy="295.500" r="26.600" fill="#fff" stroke="url(#w1)" stroke-width="2.700"/><g fill="url(#e1)" stroke="none"><rect x="1033" y="205.800" width="3.100" height="7.500" rx="1.300"/><rect x="1044.100" y="205.800" width="3.100" height="7.500" rx="1.300"/><path d="M1030.300 212.300 H1050 V215.200 H1049 V218 C1049 222.300 1045.500 225.200 1040.200 225.200 C1034.800 225.200 1031.300 222.300 1031.300 218 V215.200 H1030.300Z"/></g><path d="M1040.200 224.800 V229 C1040.200 231.300 1041.500 232.600 1043.800 232.600 H1051" fill="none" stroke="url(#e1)" stroke-width="1.700" stroke-linecap="round"/><path d="M1037.600 221.300 H1042.800" stroke="#fff" stroke-width=".9" stroke-linecap="round"/><g fill="url(#w1)"><path d="M1030.700 283.600 H1050.300 V292 H1046.500 C1045 292 1044.400 292.800 1044.400 294 V305.500 H1036.600 V294 C1036.600 292.800 1036 292 1034.500 292 H1030.700Z"/><rect x="1027.700" y="282.600" width="1.900" height="10.400" rx=".6"/><rect x="1051.400" y="282.600" width="1.900" height="10.400" rx=".6"/><rect x="1025.200" y="286.900" width="2.500" height="1.600"/><rect x="1053.300" y="286.900" width="2.500" height="1.600"/><rect x="1034.400" y="306.300" width="12.200" height="1.900" rx=".6"/><rect x="1035.400" y="309" width="10.200" height="1.300" rx=".5"/></g></svg>
<div style="position:absolute;left:1080.3px;top:191.55px;height:12.3px;line-height:12.3px;font-size:8.2px;color:#50555c;font-weight:400;white-space:nowrap;">电</div><div style="position:absolute;left:1080px;top:201.80px;height:22.8px;line-height:22.8px;font-size:15.2px;color:#383d44;font-weight:700;white-space:nowrap;">535.32</div><div style="position:absolute;left:1131px;top:209.05px;height:12.9px;line-height:12.9px;font-size:8.6px;color:#383d44;font-weight:700;white-space:nowrap;">kWh</div><div style="position:absolute;left:1080.3px;top:223.43px;height:9.75px;line-height:9.75px;font-size:6.5px;color:#8d939b;font-weight:400;white-space:nowrap;">同比:</div><svg style="position:absolute;left:1101.60px;top:225.60px" width="3.2" height="5.4" viewBox="0 0 3.2 5.4"><path d="M1.6 5.4 V.8 M.5 1.9000000000000001 L1.6 .6 L2.7 1.9000000000000001" fill="none" stroke="#f5b73b" stroke-width=".9" stroke-linecap="round" stroke-linejoin="round"/></svg><div style="position:absolute;left:1108.7px;top:223.17px;height:10.27px;line-height:10.27px;font-size:6.85px;color:#7d838b;font-weight:400;white-space:nowrap;">241.32 <span style="font-size:6.200px">%</span></div><div style="position:absolute;left:1158.5px;top:223.43px;height:9.75px;line-height:9.75px;font-size:6.5px;color:#8d939b;font-weight:400;white-space:nowrap;">环比:</div><svg style="position:absolute;left:1179.60px;top:225.60px" width="3.2" height="5.4" viewBox="0 0 3.2 5.4"><path d="M1.6 0 V4.6000000000000005 M.5 3.5000000000000004 L1.6 4.800000000000001 L2.7 3.5000000000000004" fill="none" stroke="#2fbf71" stroke-width=".9" stroke-linecap="round" stroke-linejoin="round"/></svg><div style="position:absolute;left:1186.6px;top:223.17px;height:10.27px;line-height:10.27px;font-size:6.85px;color:#7d838b;font-weight:400;white-space:nowrap;">-12.09 <span style="font-size:6.200px">%</span></div>
<div style="position:absolute;left:1080.3px;top:268.15px;height:12.3px;line-height:12.3px;font-size:8.2px;color:#50555c;font-weight:400;white-space:nowrap;">水</div><div style="position:absolute;left:1080px;top:277.80px;height:22.8px;line-height:22.8px;font-size:15.2px;color:#383d44;font-weight:700;white-space:nowrap;">72.00</div><div style="position:absolute;left:1122.3px;top:285.05px;height:12.9px;line-height:12.9px;font-size:8.6px;color:#383d44;font-weight:700;white-space:nowrap;">t</div><div style="position:absolute;left:1080.3px;top:299.32px;height:9.75px;line-height:9.75px;font-size:6.5px;color:#8d939b;font-weight:400;white-space:nowrap;">同比:</div><svg style="position:absolute;left:1101.60px;top:301.50px" width="3.2" height="5.4" viewBox="0 0 3.2 5.4"><path d="M1.6 0 V4.6000000000000005 M.5 3.5000000000000004 L1.6 4.800000000000001 L2.7 3.5000000000000004" fill="none" stroke="#2fbf71" stroke-width=".9" stroke-linecap="round" stroke-linejoin="round"/></svg><div style="position:absolute;left:1108.7px;top:299.06px;height:10.27px;line-height:10.27px;font-size:6.85px;color:#7d838b;font-weight:400;white-space:nowrap;">-51.36 <span style="font-size:6.200px">%</span></div><div style="position:absolute;left:1158.5px;top:299.32px;height:9.75px;line-height:9.75px;font-size:6.5px;color:#8d939b;font-weight:400;white-space:nowrap;">环比:</div><svg style="position:absolute;left:1179.60px;top:301.50px" width="3.2" height="5.4" viewBox="0 0 3.2 5.4"><path d="M1.6 0 V4.6000000000000005 M.5 3.5000000000000004 L1.6 4.800000000000001 L2.7 3.5000000000000004" fill="none" stroke="#2fbf71" stroke-width=".9" stroke-linecap="round" stroke-linejoin="round"/></svg><div style="position:absolute;left:1186.6px;top:299.06px;height:10.27px;line-height:10.27px;font-size:6.85px;color:#7d838b;font-weight:400;white-space:nowrap;">-64.18 <span style="font-size:6.200px">%</span></div>
</section>
<!-- card-ratio -->
<section>
<div style="position:absolute;left:1000.2px;top:382.0px;width:2.3px;height:9.2px;background:#1677ff;border-radius:.5px;"></div><div style="position:absolute;left:1005.4000000000001px;top:381.21px;height:12.38px;line-height:12.38px;font-size:8.25px;color:#161c2b;font-weight:700;white-space:nowrap;">本日用能占比(kgce)</div>
<svg style="position:absolute;left:0;top:0" width="1267" height="618" viewBox="0 0 1267 618"><path d="M1124.50 406.60 A35 35 0 1 1 1106.55 411.55 L1112.91 422.20 A22.6 22.6 0 1 0 1124.50 419.00Z" fill="#0f7af3" stroke="#f2f6fb" stroke-width=".6"/><path d="M1124.50 406.60 A35 35 0 0 0 1106.55 411.55 L1112.91 422.20 A22.6 22.6 0 0 1 1124.50 419.00Z" fill="#58cd74" stroke="#f2f6fb" stroke-width=".6"/></svg>
<div style="position:absolute;left:1029px;top:503.1px;width:4.8px;height:4.8px;background:#1673f5;border-radius:50%;"></div>
<div style="position:absolute;left:1041.6px;top:500.75px;height:12.3px;line-height:12.3px;font-size:8.2px;color:#6a6f77;font-weight:400;white-space:nowrap;">电能耗</div>
<div style="position:absolute;left:1106px;top:498.45px;height:15.3px;line-height:15.3px;font-size:10.2px;color:#41464d;font-weight:700;white-space:nowrap;">91.42%</div>
<div style="position:absolute;left:1163.8px;top:498.45px;height:15.3px;line-height:15.3px;font-size:10.2px;color:#41464d;font-weight:700;white-space:nowrap;">65.79 <span style="font-size:7px;font-weight:400;color:#bcc1c8">kgce</span></div>
<div style="position:absolute;left:1029px;top:529.3000000000001px;width:4.8px;height:4.8px;background:#5dcf86;border-radius:50%;"></div>
<div style="position:absolute;left:1041.6px;top:526.95px;height:12.3px;line-height:12.3px;font-size:8.2px;color:#6a6f77;font-weight:400;white-space:nowrap;">水能耗</div>
<div style="position:absolute;left:1106px;top:524.65px;height:15.3px;line-height:15.3px;font-size:10.2px;color:#41464d;font-weight:700;white-space:nowrap;">8.57%</div>
<div style="position:absolute;left:1163.8px;top:524.65px;height:15.3px;line-height:15.3px;font-size:10.2px;color:#41464d;font-weight:700;white-space:nowrap;">6.17 <span style="font-size:7px;font-weight:400;color:#bcc1c8">kgce</span></div>
</section>
<!-- header -->
<header>
<div style="position:absolute;left:4px;top:5px;width:1256.8px;height:24.4px;background:linear-gradient(180deg,rgba(0,20,90,0) 0,rgba(0,20,90,0) 45%,rgba(0,20,90,.22) 100%),linear-gradient(90deg,#1c63ab 0,#1560aa 120px,#105ca8 300px,#0e55a2 480px,#0c479a 580px,#0a3b8f 680px,#0a378b 900px,#0a2f82 1040px,#0a2b7d 1123px,#0e5ca8 1123px,#0d63ad 1257px);box-shadow:0 1.500px 5px rgba(50,45,45,.50);z-index:5;"></div>
<svg style="position:absolute;left:0;top:0;z-index:6" width="1267" height="618" viewBox="0 0 1267 618"><defs><clipPath id="hc"><rect x="4" y="5" width="1122.500" height="24.200"/></clipPath><linearGradient id="sw1" x1="0" y1="0" x2="1" y2="0"><stop offset="0" stop-color="#0d5aa2"/><stop offset=".5" stop-color="#1068ad"/><stop offset="1" stop-color="#0d56a0"/></linearGradient></defs><g clip-path="url(#hc)"><path d="M687 29.300 L831 29.300 L902 5 L780 5Z" fill="url(#sw1)" opacity=".9"/><path d="M885 29.300 L935 29.300 L1000 5 L962 5Z" fill="#0e58a1" opacity=".55"/><path d="M300 29.300 L320 29.300 L520 5 L505 5Z" fill="#2a7cc0" opacity=".22"/><path d="M980 29.300 L1040 29.300 L1090 5 L1050 5Z" fill="#0e4f9a" opacity=".3"/></g><rect x="1126.600" y="5" width="1.200" height="24.200" fill="#e8f0ff" opacity=".85"/></svg>
<svg style="position:absolute;left:3px;top:9px;z-index:7" width="14" height="13" viewBox="0 0 14 13"><path d="M10.6 3.2A4.6 4.6 0 1 0 10.6 9.8" fill="none" stroke="#e21f52" stroke-width="2.3"/><path d="M8.2 4.3 L12.6 4.3 L12.6 6.3 L8.2 6.3Z" fill="#2b8fe6"/><path d="M8.2 6.5 L11.4 6.5 L11.4 8.3 L8.2 8.3Z" fill="#35b44a"/><circle cx="6.4" cy="6.5" r="1.3" fill="#7a3fc4"/></svg>
<div style="position:absolute;left:19.3px;top:6.30px;height:12.0px;line-height:12.0px;font-size:8px;color:#fff;font-weight:700;white-space:nowrap;letter-spacing:.95px;z-index:7;">中机智源</div>
<div style="position:absolute;left:22.7px;top:15.67px;height:10.05px;line-height:10.05px;font-size:6.7px;color:#fff;font-weight:400;white-space:nowrap;z-index:7;transform:scaleX(.79);transform-origin:0 50%;">CMC IETEC</div>
<div style="position:absolute;left:61.6px;top:8.6px;width:1px;height:13px;background:rgba(255,255,255,.5);z-index:7;"></div>
<div style="position:absolute;left:71.5px;top:8.05px;height:16.5px;line-height:16.5px;font-size:11px;color:#fff;font-weight:900;white-space:nowrap;letter-spacing:.58px;z-index:7;text-shadow:0 1px 1px rgba(0,20,60,.5);">中机智源综合智慧能源管理平台</div>
<div style="position:absolute;left:975.8px;top:9.55px;height:12.3px;line-height:12.3px;font-size:8.2px;color:#fff;font-weight:400;white-space:nowrap;z-index:7;letter-spacing:.25px;">建设单位:</div>
<svg style="position:absolute;left:1019.5px;top:4.5px;z-index:7" width="20.5" height="20" viewBox="0 0 41 40"><path d="M20.5 1 L40 20 L20.5 39 L1 20Z" fill="#fff"/><path d="M26 12.5 C19 9.5 10.5 13.5 10.5 20.5 C10.5 27 17 30.5 23 28 L25.5 20.5 L18 20.5" fill="none" stroke="#0b2f80" stroke-width="3.4"/><path d="M25 14 L33.5 14 L29 27.5 L24.5 27.5 L27.5 18 L24 18Z" fill="#0b2f80"/></svg>
<div style="position:absolute;left:1046px;top:9.47px;height:12.45px;line-height:12.45px;font-size:8.3px;color:#fff;font-weight:400;white-space:nowrap;z-index:7;letter-spacing:.1px;">中机智源</div>
<svg style="position:absolute;left:1084.8px;top:6px;z-index:7" width="17" height="17" viewBox="0 0 34 34"><circle cx="17" cy="17" r="17" fill="#c6c8ce"/><circle cx="17" cy="13" r="5.2" fill="#fff"/><path d="M7.5 26.5 C7.5 20.5 12 19.2 17 19.2 C22 19.2 26.5 20.5 26.5 26.5Z" fill="#fff"/></svg>
<div style="position:absolute;left:1108.4px;top:8.60px;height:13.8px;line-height:13.8px;font-size:9.2px;color:#fff;font-weight:400;white-space:nowrap;z-index:7;">杨磊，你好</div>
<svg style="position:absolute;left:1182.2px;top:9.4px;z-index:7" width="13.4" height="11.8" viewBox="0 0 512 460"><path transform="translate(0,-26)" fill="#fff" d="M8.309 189.836L184.313 37.851C199.719 24.546 224 35.347 224 56.015v80.053c160.629 1.839 288 34.032 288 186.258 0 61.441-39.581 122.309-83.333 154.132-13.653 9.931-33.111-2.533-28.077-18.631 45.344-145.012-21.507-183.51-176.59-185.742V360c0 20.7-24.3 31.453-39.687 18.164l-176.004-152c-11.071-9.562-11.086-26.753 0-36.328z"/></svg>
<svg style="position:absolute;left:1212.4px;top:8.8px;z-index:7" width="13.2" height="12.6" viewBox="-1 0 26 23"><path fill="#fff" d="M13.3 3.2V2.3a1.3 1.3 0 0 0-2.6 0V3.2C7.6 3.8 5.3 6.4 5.3 9.7c0 4.3-1.500 5.600-2.300 6.500-.3.300-.4.600-.4.900 0 .7.500 1.300 1.300 1.300h16.200c.8 0 1.300-.6 1.300-1.300 0-.3-.1-.6-.4-.9-.8-.9-2.300-2.200-2.300-6.500 0-3.300-2.300-5.900-5.400-6.500z"/><path fill="#fff" d="M12 22a2.200 2.200 0 0 0 2.200-2.200h-4.400A2.200 2.200 0 0 0 12 22z"/><path d="M3.200 3.500C1 5.700 0 8.500.3 11.500M20.800 3.500c2.200 2.200 3.200 5 2.900 8" stroke="#fff" stroke-width="1.600" fill="none" stroke-linecap="round"/></svg>
<svg style="position:absolute;left:1241.6px;top:8.7px;z-index:7" width="12" height="12" viewBox="0 0 12 12"><path fill="#fff" d="M.5 .3H6V12L.5 10.300ZM6 .3H10.800V1.900H6ZM6 8.700H10.800V10.300H6ZM7.200 4.100H9.500V2.800L12 5.300 9.500 7.800V6.500H7.200Z"/></svg>
</header>
</div></div>
</body></html>
